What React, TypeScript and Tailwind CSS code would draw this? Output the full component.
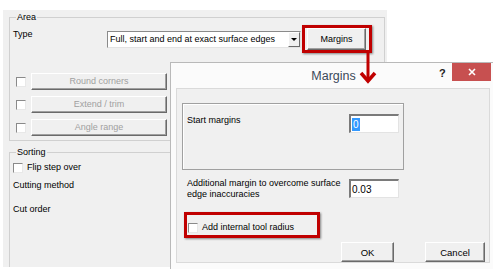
import React from "react";

const Check = ({ className = "" }: { className?: string }) => (
  <span
    className={`block w-[10px] h-[10px] bg-white border border-t-[#8a8a8a] border-l-[#8a8a8a] border-b-[#e8e8e8] border-r-[#e8e8e8] shrink-0 ${className}`}
  />
);

const Btn3d = ({
  children,
  className = "",
  disabled = false,
}: {
  children: React.ReactNode;
  className?: string;
  disabled?: boolean;
}) => (
  <div
    className={`flex items-center justify-center bg-[#f0f0f0] border border-t-white border-l-white border-b-[#6a6a6a] border-r-[#6a6a6a] shadow-[inset_-1px_-1px_0_#a0a0a0] ${
      disabled ? "text-[#a0a0a0]" : "text-black"
    } ${className}`}
  >
    {children}
  </div>
);

const Field = ({ value, selected = false }: { value: string; selected?: boolean }) => (
  <div className="w-[50px] h-[19px] bg-white border-t-2 border-l-2 border-t-[#7a7a7a] border-l-[#7a7a7a] border-b border-r border-b-[#e3e3e3] border-r-[#e3e3e3] flex items-center pl-[1px] text-[10px] shrink-0">
    <span className={selected ? "bg-[#3399ff] text-white px-[1px] leading-[13px]" : "leading-[13px]"}>{value}</span>
  </div>
);

export default function App() {
  return (
    <div className="relative w-[493px] h-[274px] bg-white overflow-hidden font-['Liberation_Sans',Arial,sans-serif] text-[9px] leading-[11px] text-black">
      {/* main window */}
      <div className="ml-[3px] mt-[10px] w-[384px] h-[257px] bg-[#f0f0f0] overflow-hidden pl-[6px]">
        <fieldset className="mt-[2px] w-[376px] h-[129px] border border-[#d0d0d0] pl-[3px]">
          <legend className="ml-[3px] px-[1px] leading-[11px]">Area</legend>
          <div className="flex items-start mt-[5px] h-[22px]">
            <span className="w-[94px] mt-[1px]">Type</span>
            <div className="mt-[3px] w-[194px] h-[17px] bg-white border border-t-[#8a8a8a] border-l-[#8a8a8a] border-b-[#e3e3e3] border-r-[#e3e3e3] flex items-center">
              <span className="flex-1 pl-[2px] text-[9px] whitespace-nowrap overflow-hidden">
                Full, start and end at exact surface edges
              </span>
              <div className="w-[12px] h-[15px] bg-[#f0f0f0] border border-t-white border-l-white border-b-[#6a6a6a] border-r-[#6a6a6a] flex items-center justify-center">
                <span className="block w-0 h-0 border-l-[3px] border-r-[3px] border-t-[3px] border-l-transparent border-r-transparent border-t-black" />
              </div>
            </div>
            <Btn3d className="ml-[6px] w-[59px] h-[22px]">Margins</Btn3d>
          </div>
          <div className="flex flex-col gap-[6px] mt-[23px]">
            {["Round corners", "Extend / trim", "Angle range"].map((t) => (
              <div key={t} className="flex items-center h-[17px]">
                <Check className="ml-[3px]" />
                <Btn3d disabled className="ml-[5px] w-[136px] h-[17px]">
                  {t}
                </Btn3d>
              </div>
            ))}
          </div>
        </fieldset>
        <fieldset className="mt-[6px] w-[162px] h-[140px] border border-[#d0d0d0] pl-[3px]">
          <legend className="ml-[3px] px-[1px] leading-[11px]">Sorting</legend>
          <div className="flex items-center mt-[4px]">
            <Check className="mr-[4px]" />
            <span>Flip step over</span>
          </div>
          <div className="mt-[7px]">Cutting method</div>
          <div className="mt-[13px]">Cut order</div>
        </fieldset>
      </div>

      {/* Margins dialog */}
      <div className="absolute left-[170px] top-[62px] w-[326px] h-[207px] bg-[#fbfbfb] border-l border-t border-[#b9b9b9] flex flex-col">
        <div className="relative h-[25px] flex items-center justify-center shrink-0">
          <span className="font-['Liberation_Sans',Arial,sans-serif] text-[12.5px] text-[#3b4a5a] mt-[2px]">Margins</span>
          <span className="absolute left-[268px] top-[5px] text-[11px] font-bold text-[#222]">?</span>
          <div className="absolute left-[281px] top-0 w-[39px] h-[18px] bg-[#c75050] flex items-center justify-center">
            <svg width="8" height="8" viewBox="0 0 8 8">
              <path d="M1 1 L7 7 M7 1 L1 7" stroke="white" strokeWidth="1.6" />
            </svg>
          </div>
        </div>
        <div className="ml-[5px] w-[314px] h-[175px] bg-[#f0f0f0] border border-[#dadada] pl-[5px] pt-[14px] flex flex-col">
          <div className="w-[222px] h-[67px] border border-[#a0a0a0] shadow-[inset_1px_1px_0_#fff] flex justify-between items-start pt-[10px] pl-[4px] pr-[4px]">
            <span className="mt-[1px]">Start margins</span>
            <Field value="0" selected />
          </div>
          <div className="w-[222px] flex justify-between items-start mt-[9px] pl-[5px] pr-[5px]">
            <span className="-mt-[1px] w-[160px] leading-[11px]">
              Additional margin to overcome surface edge inaccuracies
            </span>
            <Field value="0.03" />
          </div>
          <div className="flex items-center mt-[22px] ml-[6px]">
            <Check className="mr-[4px]" />
            <span>Add internal tool radius</span>
          </div>
          <div className="flex justify-end gap-[31px] mt-[9px] pr-[4px]">
            <Btn3d className="w-[53px] h-[20px] text-[9.5px]">OK</Btn3d>
            <Btn3d className="w-[60px] h-[20px] text-[9.5px]">Cancel</Btn3d>
          </div>
        </div>
      </div>

      {/* red annotations */}
      <div className="absolute left-[302px] top-[25px] w-[70px] h-[28px] border-[3px] border-[#c00000] shadow-[1px_1px_2px_rgba(0,0,0,0.45)]" />
      <div className="absolute left-[184px] top-[212px] w-[136px] h-[26px] border-[3px] border-[#c00000] shadow-[1px_1px_2px_rgba(0,0,0,0.45)]" />
      <svg className="absolute left-[358px] top-[52px]" width="22" height="34" viewBox="0 0 22 34">
        <path d="M10 0 L10 28" stroke="#c00000" strokeWidth="3" />
        <path d="M3 21 L10 29 L17 21" stroke="#c00000" strokeWidth="3.5" fill="none" strokeLinejoin="miter" />
      </svg>
    </div>
  );
}
